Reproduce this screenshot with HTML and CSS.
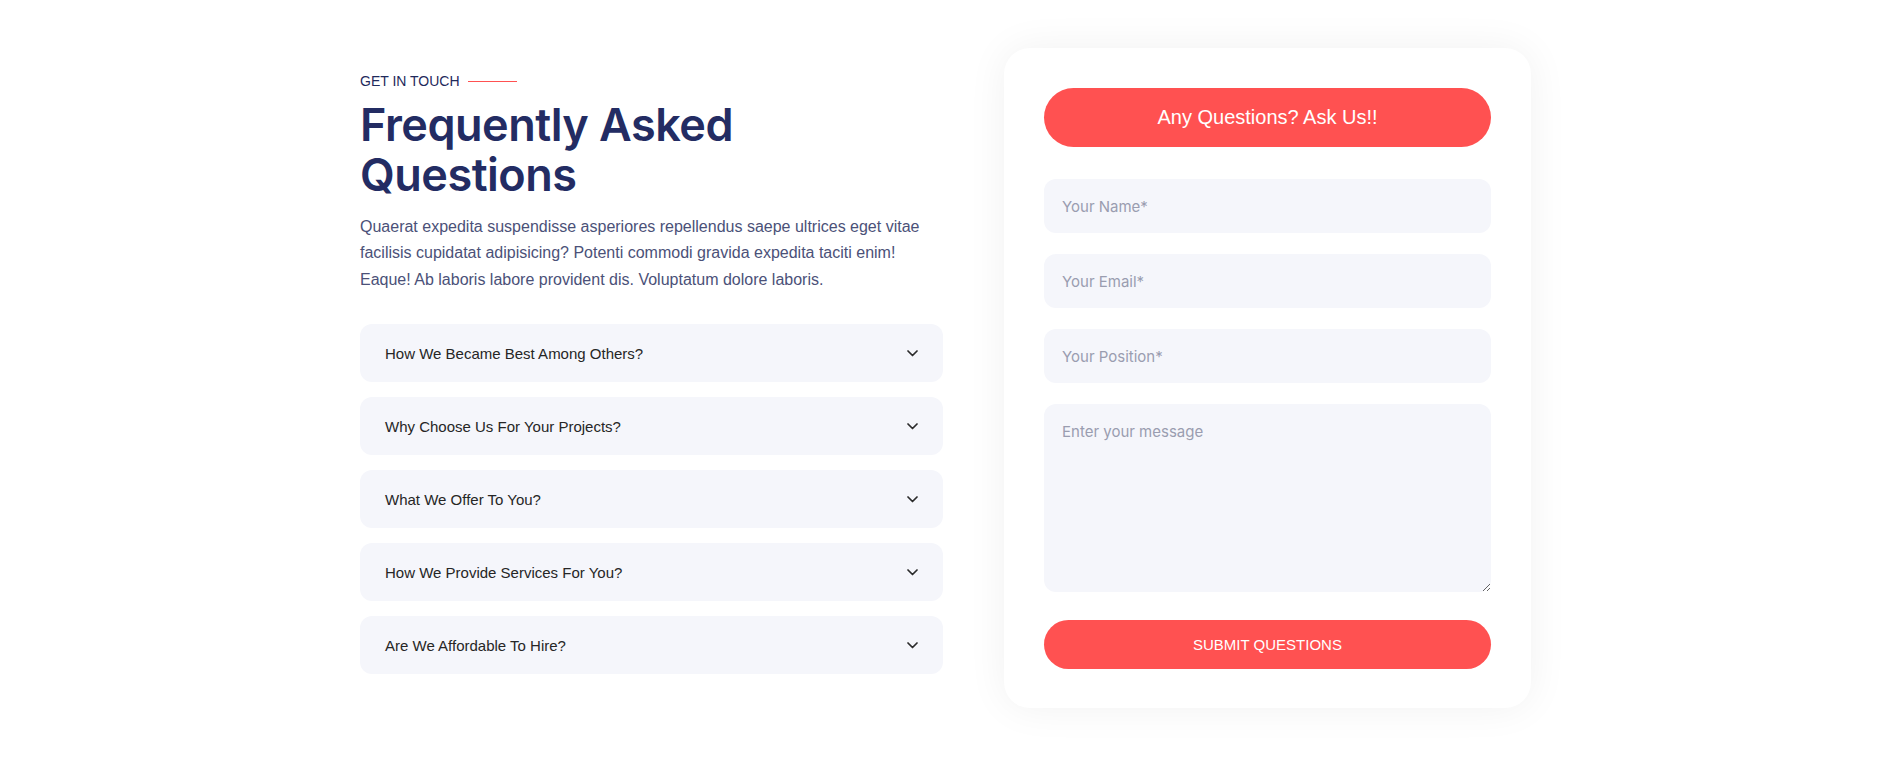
FILE: index.html
```html
<!DOCTYPE html>
<html lang="en">
<head>
<meta charset="utf-8">
<title>Frequently Asked Questions</title>
<link rel="stylesheet" href="styles.css">
</head>
<body>
<section class="faq-section">
  <div class="faq-left">
    <div class="tag"><span>GET IN TOUCH</span><i class="tag-line"></i></div>
    <h2 class="faq-title">Frequently Asked<br>Questions</h2>
    <p class="faq-text">Quaerat expedita suspendisse asperiores repellendus saepe ultrices eget vitae facilisis cupidatat adipisicing? Potenti commodi gravida expedita taciti enim! Eaque! Ab laboris labore provident dis. Voluptatum dolore laboris.</p>
    <div class="accordion">
      <div class="acc-item"><span>How We Became Best Among Others?</span><svg class="chev" width="11" height="7" viewBox="0 0 11 7"><polyline points="1,1 5.5,5.5 10,1" /></svg></div>
      <div class="acc-item"><span>Why Choose Us For Your Projects?</span><svg class="chev" width="11" height="7" viewBox="0 0 11 7"><polyline points="1,1 5.5,5.5 10,1" /></svg></div>
      <div class="acc-item"><span>What We Offer To You?</span><svg class="chev" width="11" height="7" viewBox="0 0 11 7"><polyline points="1,1 5.5,5.5 10,1" /></svg></div>
      <div class="acc-item"><span>How We Provide Services For You?</span><svg class="chev" width="11" height="7" viewBox="0 0 11 7"><polyline points="1,1 5.5,5.5 10,1" /></svg></div>
      <div class="acc-item"><span>Are We Affordable To Hire?</span><svg class="chev" width="11" height="7" viewBox="0 0 11 7"><polyline points="1,1 5.5,5.5 10,1" /></svg></div>
    </div>
  </div>
  <form class="faq-card">
    <div class="card-head">Any Questions? Ask Us!!</div>
    <input class="field" type="text" placeholder="Your Name*">
    <input class="field" type="email" placeholder="Your Email*">
    <input class="field" type="text" placeholder="Your Position*">
    <textarea class="field area" placeholder="Enter your message"></textarea>
    <button class="submit" type="button">SUBMIT QUESTIONS</button>
  </form>
</section>
</body>
</html>
```

FILE: styles.css
```css
* { box-sizing: border-box; }
html, body { margin: 0; padding: 0; background: #ffffff; }
body { font-family: "Liberation Sans", Arial, sans-serif; }

.faq-section {
  display: flex;
  justify-content: center;
  align-items: flex-start;
  gap: 61px;
  padding: 48px 0 40px 14px;
}

.faq-left {
  width: 583px;
  padding-top: 23px;
}

.tag {
  display: flex;
  align-items: center;
  height: 20px;
  font-size: 14px;
  line-height: 20px;
  color: #1f2a5c;
}
.tag-line {
  display: block;
  width: 49px;
  height: 1px;
  margin-left: 8px;
  background: #ff5151;
}

.faq-title {
  margin: 9px 0 0;
  font-family: Inter, "Noto Sans", sans-serif;
  font-weight: 600;
  font-size: 45px;
  line-height: 50px;
  letter-spacing: -0.5px;
  color: #232c63;
}

.faq-text {
  margin: 14px 0 0;
  font-size: 16px;
  line-height: 26.4px;
  color: #4b5178;
}

.accordion {
  margin-top: 31px;
  display: flex;
  flex-direction: column;
  gap: 15px;
}
.acc-item {
  height: 58px;
  padding: 0 25px;
  border-radius: 12px;
  background: #f5f6fb;
  display: flex;
  align-items: center;
  justify-content: space-between;
  font-size: 15px;
  color: #262626;
}
.chev {
  fill: none;
  stroke: #2b2b2b;
  stroke-width: 1.7;
  stroke-linecap: round;
  stroke-linejoin: round;
}

.faq-card {
  width: 527px;
  margin: 0;
  padding: 40px 40px 39px;
  background: #ffffff;
  border-radius: 26px;
  box-shadow: 0 0 40px rgba(0, 0, 0, 0.06);
  display: flex;
  flex-direction: column;
}
.card-head {
  height: 59px;
  border-radius: 40px;
  background: #ff5151;
  color: #ffffff;
  font-size: 20px;
  display: flex;
  align-items: center;
  justify-content: center;
  margin-bottom: 32px;
}
.field {
  display: block;
  width: 100%;
  height: 54px;
  margin: 0 0 21px;
  padding: 0 18px;
  border: none;
  outline: none;
  border-radius: 12px;
  background: #f5f6fb;
  font-family: Inter, "Noto Sans", sans-serif;
  font-size: 15px;
  color: #333;
}
.field::placeholder { color: #9a9db0; }
.area {
  height: 188px;
  padding: 17px 18px;
  margin-bottom: 28px;
  line-height: 22px;
}
.submit {
  height: 49px;
  border: none;
  border-radius: 40px;
  background: #ff5151;
  color: #ffffff;
  font-family: "Liberation Sans", Arial, sans-serif;
  font-size: 15px;
  cursor: pointer;
}
```
